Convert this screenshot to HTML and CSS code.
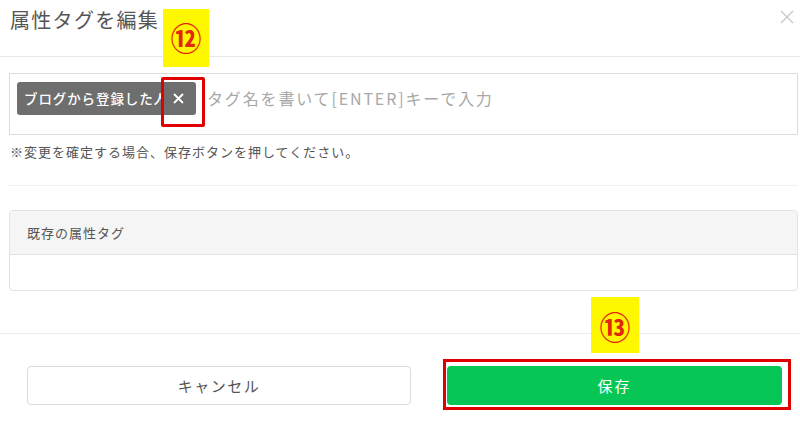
FILE: index.html
```html
<!DOCTYPE html>
<html lang="ja">
<head>
<meta charset="utf-8">
<title>属性タグを編集</title>
<link rel="stylesheet" href="styles.css">
</head>
<body>
<div class="modal">
  <div class="modal-header">
    <h1 class="title">属性タグを編集</h1>
    <button class="close" aria-label="close">
      <svg width="14" height="14" viewBox="0 0 14 14"><path d="M1 1L13 13M13 1L1 13" stroke="#c8c8c8" stroke-width="1.4" fill="none"/></svg>
    </button>
  </div>
  <div class="modal-body">
    <div class="tag-input">
      <div class="chip">
        <span class="chip-text">ブログから登録した人</span>
        <span class="chip-x">
          <svg width="11" height="11" viewBox="0 0 11 11"><path d="M1 1L10 10M10 1L1 10" stroke="#fff" stroke-width="1.8" fill="none"/></svg>
        </span>
      </div>
      <span class="placeholder">タグ名を書いて[ENTER]キーで入力</span>
    </div>
    <p class="note">※変更を確定する場合、保存ボタンを押してください。</p>
    <div class="divider"></div>
    <div class="panel">
      <div class="panel-head">既存の属性タグ</div>
      <div class="panel-body"></div>
    </div>
  </div>
  <div class="modal-footer">
    <button class="btn btn-cancel">キャンセル</button>
    <button class="btn btn-save">保存</button>
  </div>

  <div class="badge badge-12">⑫</div>
  <div class="mark mark-12"></div>
  <div class="badge badge-13">⑬</div>
  <div class="mark mark-13"></div>
</div>
</body>
</html>
```

FILE: styles.css
```css
* { box-sizing: border-box; }
html, body { margin: 0; padding: 0; background: #fff; }
body {
  font-family: "Noto Sans CJK JP", "Noto Sans", sans-serif;
  color: #555;
  width: 800px;
  height: 422px;
  overflow: hidden;
}
.modal { position: relative; width: 800px; height: 422px; }

.modal-header {
  height: 57px;
  border-bottom: 1px solid #e8e8e8;
  display: flex;
  justify-content: space-between;
  align-items: flex-start;
  padding: 6px 6px 0 10px;
}
.title {
  margin: 0;
  font-size: 20px;
  line-height: 28px;
  font-weight: 400;
  letter-spacing: 1.3px;
  color: #555;
}
.close {
  border: 0;
  background: none;
  padding: 0;
  margin-top: 4px;
  width: 14px;
  height: 14px;
  display: flex;
}

.modal-body { padding: 16px 2px 0 9px; }

.tag-input {
  height: 62px;
  border: 1px solid #dcdcdc;
  display: flex;
  align-items: flex-start;
  padding: 8px 7px;
}
.chip {
  display: flex;
  height: 33px;
  width: 179px;
  background: #6e6e6e;
  border-radius: 3px;
  color: #fff;
}
.chip-text {
  width: 145px;
  overflow: hidden;
  white-space: nowrap;
  padding-left: 7px;
  font-size: 13.5px;
  font-weight: 500;
  letter-spacing: 0.9px;
  line-height: 33px;
}
.chip-x {
  flex: 1;
  display: flex;
  align-items: center;
  justify-content: center;
  padding-right: 2px;
}
.placeholder {
  margin-left: 11px;
  font-size: 16px;
  line-height: 33px;
  letter-spacing: 1.85px;
  color: #a8a8a8;
  white-space: nowrap;
}

.note {
  margin: 7px 0 0 1px;
  font-size: 13px;
  line-height: 20px;
  letter-spacing: 1px;
  color: #555;
}
.divider {
  margin-top: 23px;
  height: 1px;
  background: #f1f1f1;
  margin-left: -1px;
}

.panel {
  margin-top: 24px;
  border: 1px solid #e2e2e2;
  border-radius: 4px;
  overflow: hidden;
}
.panel-head {
  height: 44px;
  background: #f5f5f5;
  border-bottom: 1px solid #e2e2e2;
  padding-left: 17px;
  font-size: 13px;
  line-height: 43px;
  letter-spacing: 1px;
  color: #555;
}
.panel-body { height: 35px; }

.modal-footer {
  margin-top: 42px;
  border-top: 1px solid #ececec;
  padding: 32px 0 0 27px;
  display: grid;
  grid-template-columns: 384px 335px;
  column-gap: 36px;
}
.btn {
  height: 39px;
  border-radius: 4px;
  font-family: inherit;
  font-size: 15px;
  letter-spacing: 1.5px;
  cursor: pointer;
}
.btn-cancel {
  background: #fff;
  border: 1px solid #dadada;
  color: #555;
}
.btn-save {
  background: #06c755;
  border: 0;
  color: #fff;
  letter-spacing: 2px;
}

/* annotation overlays */
.badge {
  position: absolute;
  background: #fff700;
  color: #e2270f;
  font-size: 31px;
  font-weight: 700;
  display: flex;
  justify-content: center;
  align-items: center;
  line-height: 1;
}
.badge-12 { left: 163px; top: 9px; width: 46px; height: 58px; padding-bottom: 4px; }
.badge-13 { left: 591px; top: 297px; width: 48px; height: 56px; }
.mark {
  position: absolute;
  border: 3px solid #e00000;
}
.mark-12 { left: 161px; top: 77px; width: 44px; height: 50px; border-radius: 2px; }
.mark-13 { left: 443px; top: 359px; width: 348px; height: 51px; }
```
